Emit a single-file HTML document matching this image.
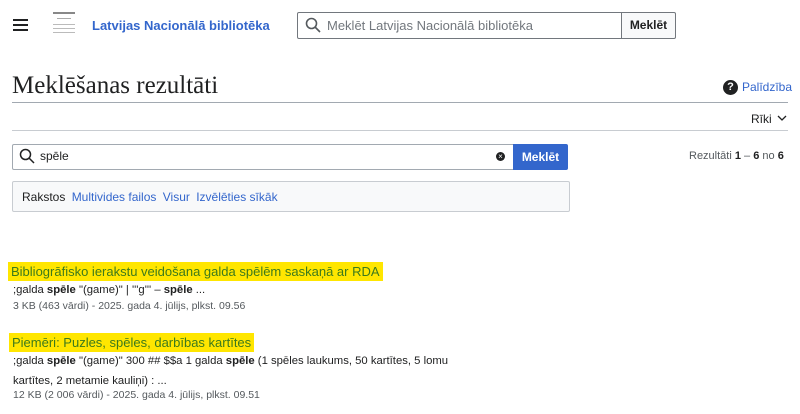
<!DOCTYPE html>
<html><head><meta charset="utf-8"><style>
body{margin:0;width:800px;height:414px;background:#fff;font-family:"Liberation Sans",sans-serif;color:#202122;position:relative;overflow:hidden}
.a{position:absolute}
a{color:#3366cc;text-decoration:none}
.hl{background:#ffe600;color:#3c7a1c;font-size:13px;padding:2px 3px}
.sn{font-size:11.3px;line-height:20px}
.mt{font-size:10.5px;color:#54595d}
</style></head><body>
<div class="a" style="left:13px;top:19px;width:15px;height:2px;background:#202122;box-shadow:0 5px 0 #202122,0 10px 0 #202122"></div>
<div class="a" style="left:53px;top:12px;width:22px;height:28px">
<div style="height:2px;background:#888;margin-bottom:4px"></div><div style="height:1px;background:#aaa;width:60%;margin:0 auto 5px"></div><div style="height:1px;background:#bbb;margin-bottom:3px"></div><div style="height:1px;background:#bbb;margin-bottom:3px"></div><div style="height:1px;background:#bbb"></div></div>
<div class="a" style="left:92px;top:18px;font-size:13px;font-weight:bold;color:#3366cc">Latvijas Nacionālā bibliotēka</div>
<div class="a" style="left:297px;top:12px;width:323px;height:25px;border:1px solid #72777d;border-radius:2px 0 0 2px"></div>
<svg class="a" style="left:305px;top:17px" width="16" height="16" viewBox="0 0 16 16"><circle cx="6.5" cy="6.5" r="5" fill="none" stroke="#54595d" stroke-width="1.6"/><path d="M10 10l5 5" stroke="#54595d" stroke-width="1.6"/></svg>
<div class="a" style="left:327px;top:18px;font-size:13px;color:#72777d">Meklēt Latvijas Nacionālā bibliotēka</div>
<div class="a" style="left:621px;top:12px;width:53px;height:25px;border:1px solid #72777d;border-radius:0 2px 2px 0;background:#f8f9fa;font-size:12px;font-weight:bold;text-align:center;line-height:25px">Meklēt</div>
<div class="a" style="left:12px;top:72px;font-family:'Liberation Serif',serif;font-size:25px">Meklēšanas rezultāti</div>
<div class="a" style="left:12px;top:102px;width:776px;height:1px;background:#a2a9b1"></div>
<div class="a" style="left:723px;top:80px;width:15px;height:15px;border-radius:50%;background:#202122;color:#fff;font-size:11px;font-weight:bold;text-align:center;line-height:15px">?</div>
<div class="a" style="left:742px;top:80px;font-size:12px;color:#3366cc">Palīdzība</div>
<div class="a" style="left:751px;top:112px;font-size:12px">Rīki</div>
<svg class="a" style="left:777px;top:114px" width="10" height="8"><path d="M1 2l4 4 4-4" fill="none" stroke="#202122" stroke-width="1.3"/></svg>
<div class="a" style="left:12px;top:130px;width:776px;height:1px;background:#c8ccd1"></div>
<div class="a" style="left:12px;top:144px;width:500px;height:24px;border:1px solid #a2a9b1;border-radius:2px 0 0 2px"></div>
<svg class="a" style="left:19px;top:148px" width="16" height="16" viewBox="0 0 16 16"><circle cx="6.5" cy="6.5" r="5" fill="none" stroke="#202122" stroke-width="1.5"/><path d="M10 10l5 5" stroke="#202122" stroke-width="1.5"/></svg>
<div class="a" style="left:40px;top:149px;font-size:12px">spēle</div>
<div class="a" style="left:496px;top:152px;width:9px;height:9px;border-radius:50%;background:#202122;color:#fff;font-size:8px;line-height:9px;text-align:center">×</div>
<div class="a" style="left:513px;top:144px;width:55px;height:26px;background:#3366cc;border-radius:0 2px 2px 0;color:#fff;font-size:12px;font-weight:bold;text-align:center;line-height:26px">Meklēt</div>
<div class="a" style="left:689px;top:150px;font-size:11px;color:#54595d">Rezultāti <b style="color:#202122">1</b> – <b style="color:#202122">6</b> no <b style="color:#202122">6</b></div>
<div class="a" style="left:12px;top:181px;width:556px;height:29px;border:1px solid #c8ccd1;border-radius:2px;background:#f8f9fa"></div>
<div class="a" style="left:22px;top:190px;font-size:12px">Rakstos <a style="margin-left:3px">Multivides failos</a> <a style="margin-left:3px">Visur</a> <a style="margin-left:3px">Izvēlēties sīkāk</a></div>
<div class="a" style="left:8px;top:263px"><span class="hl">Bibliogrāfisko ierakstu veidošana galda spēlēm saskaņā ar RDA</span></div>
<div class="a sn" style="left:13px;top:280px">;galda <b>spēle</b> "(game)" | '''g''' – <b>spēle</b> ...</div>
<div class="a mt" style="left:13px;top:300px">3 KB (463 vārdi) - 2025. gada 4. jūlijs, plkst. 09.56</div>
<div class="a" style="left:9px;top:334px"><span class="hl">Piemēri: Puzles, spēles, darbības kartītes</span></div>
<div class="a sn" style="left:13px;top:351px;width:450px">;galda <b>spēle</b> "(game)" 300 ## $$a 1 galda <b>spēle</b> (1 spēles laukums, 50 kartītes, 5 lomu kartītes, 2 metamie kauliņi) : ...</div>
<div class="a mt" style="left:13px;top:389px">12 KB (2 006 vārdi) - 2025. gada 4. jūlijs, plkst. 09.51</div>
</body></html>
